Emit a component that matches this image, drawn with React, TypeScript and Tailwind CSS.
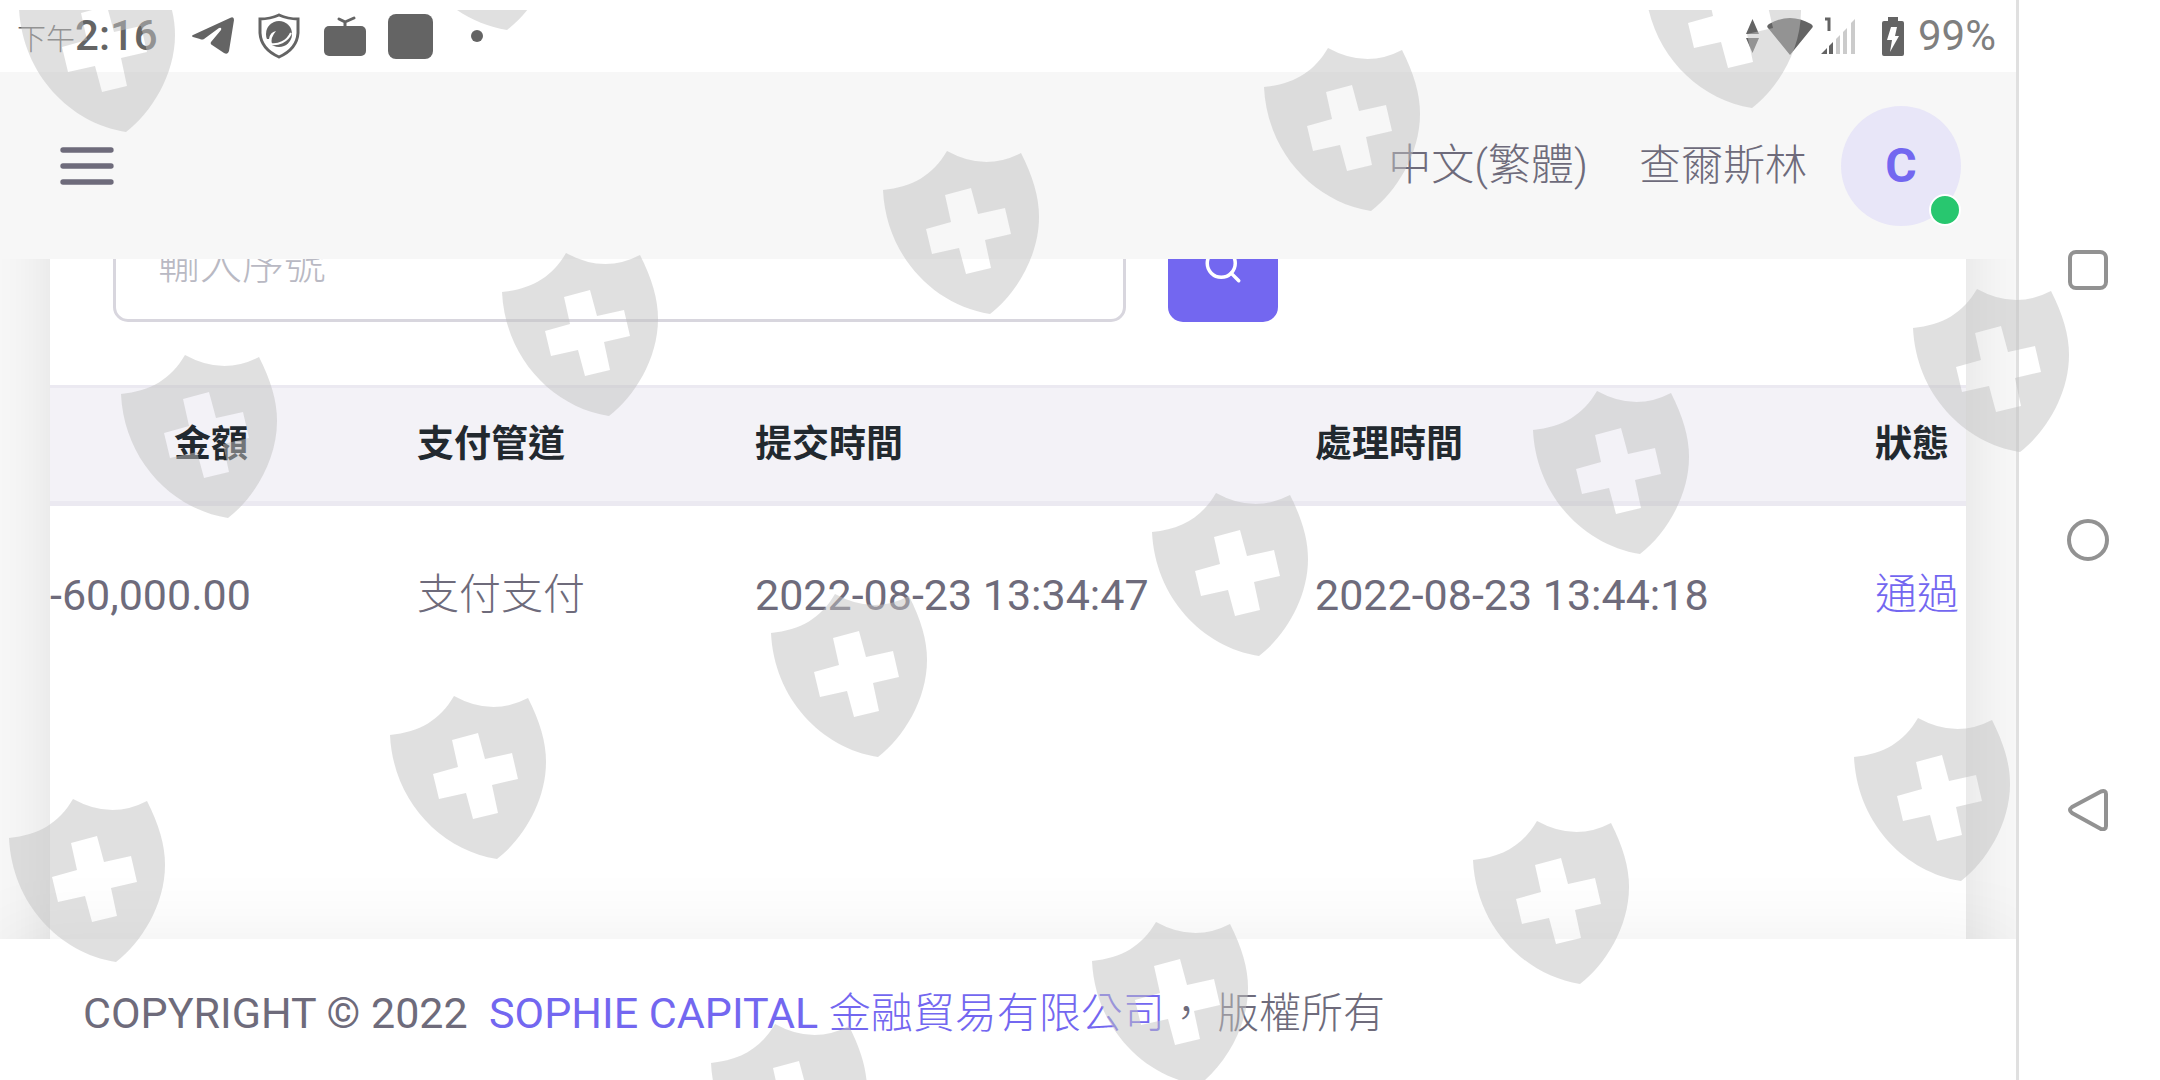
import type { ReactNode } from "react";
import { FiMenu, FiSearch } from "react-icons/fi";

const shields = [
    [19, -32], [400, -134],
    [1645, -56], [1264, 47], [883, 150], [502, 252], [121, 354],
    [1913, 288], [1533, 390], [1152, 492], [771, 593], [390, 695], [9, 798],
    [1854, 717], [1473, 820], [1092, 921], [711, 1023],
];

const columns = [
    { label: "金額", className: "w-[283px] pr-[85px] text-right" },
    { label: "支付管道", className: "w-[338px] pl-[84px] text-left" },
    { label: "提交時間", className: "w-[560px] pl-[84px] text-left" },
    { label: "處理時間", className: "w-[560px] pl-[84px] text-left" },
    { label: "狀態", className: "pl-[84px] text-left" },
];

const records = [
    { amount: "-60,000.00", channel: "支付支付", submitted: "2022-08-23 13:34:47", handled: "2022-08-23 13:44:18", status: "通過" },
];

function Watermark() {
    return (
        <div className="pointer-events-none absolute inset-x-0 top-[10px] bottom-0 z-50 overflow-hidden" aria-hidden="true">
            <svg className="h-full w-full">
                {shields.map(([x, y]) => (
                    <g key={`${x}-${y}`} transform={`translate(${x} ${y - 10})`}>
                        <path
                            fill="#c1c1c1"
                            fillOpacity="0.5"
                            fillRule="evenodd"
                            d="M0 40C30 37 50 25 64 1Q102 22 138 3C150 27 156 47 156 67C156 107 132 145 107 164C50 155 3 105 0 40ZM62 45L68 72L43 79L49 104L76 98L83 124L108 118L102 90L128 84L122 58L95 64L88 38Z"
                        />
                    </g>
                ))}
            </svg>
        </div>
    );
}

function StatusBar() {
    return (
        <div className="flex h-[72px] shrink-0 items-center justify-between bg-white pr-5 pl-[17px] text-[#646464]">
            <div className="flex items-center">
                <div className="mr-[34px] flex items-baseline">
                    <span className="text-[29px] leading-none font-light">下午</span>
                    <span className="text-[42px] leading-none font-medium">2:16</span>
                </div>
                <svg width="42" height="38" viewBox="0 0 42 38" className="mr-6" fill="currentColor">
                    <path d="M1 18L38 1Q42 -1 42 3L37 34Q36 38 32 36L20 28Q18 27 19 25L29 13Q30 10 27 11L12 22Q10 23 8 22L1 20Q-1 19 1 18Z" />
                </svg>
                <svg width="42" height="46" viewBox="0 0 42 46" className="mr-6">
                    <path d="M21 2Q12 6 2 6V20Q3 36 21 44Q39 36 40 20V6Q30 6 21 2Z" fill="none" stroke="currentColor" strokeWidth="3" />
                    <circle cx="21" cy="21" r="13" fill="currentColor" />
                    <path d="M8 26Q10 28 11 32L14 31Q12 25 18 18Q12 19 11 26Z" fill="white" />
                    <path d="M13 31C20 32 29 29 33 20" fill="none" stroke="white" strokeWidth="2" />
                </svg>
                <svg width="42" height="40" viewBox="0 0 42 40" className="mr-[22px]">
                    <path d="M15 3L21 6V12M21 6L30 2" fill="none" stroke="currentColor" strokeWidth="3" strokeLinecap="round" />
                    <rect y="10" width="42" height="30" rx="5" fill="currentColor" />
                </svg>
                <div className="mr-[38px] h-[45px] w-[45px] rounded-lg bg-current" />
                <div className="h-3 w-3 rounded-full bg-current" />
            </div>
            <div className="flex items-center">
                <svg width="13" height="34" viewBox="0 0 13 34" className="mr-2" fill="currentColor">
                    <path d="M6.5 0L13 15H0ZM0 19H13L6.5 34Z" />
                </svg>
                <svg width="46" height="37" viewBox="0 0 46 37" className="mr-2" fill="currentColor">
                    <path d="M2 6Q23 -6 44 6Q47 8 45 10L23 37L1 10Q-1 8 2 6Z" />
                </svg>
                <svg width="35" height="38" viewBox="0 0 35 38" className="mr-[26px]">
                    <path d="M0 37L6 31V37ZM8 29L12 25V37H8Z" fill="currentColor" />
                    <path d="M15 22L19 18V37H15ZM22 15L26 11V37H22ZM30 6L34 2V37H30Z" fill="#cbcbcb" />
                    <path d="M4 2H8V14" fill="none" stroke="currentColor" strokeWidth="3" />
                </svg>
                <svg width="22" height="39" viewBox="0 0 22 39" className="mr-[14px]">
                    <path d="M6 0H16V4H20Q22 4 22 6V37Q22 39 20 39H2Q0 39 0 37V6Q0 4 2 4H6Z" fill="currentColor" />
                    <path d="M9 10H15L13 19H17L8 35L10 23H5Z" fill="white" />
                </svg>
                <span className="text-[42px] leading-none text-[#7f7f7f]">99%</span>
            </div>
        </div>
    );
}

function Navbar() {
    return (
        <header className="relative z-20 flex h-[187px] shrink-0 items-center justify-between bg-[#f7f7f7] pr-[55px] pl-[55px] text-[#6e6b7b]">
            <button type="button" aria-label="menu">
                <FiMenu className="h-16 w-16" />
            </button>
            <div className="flex items-center font-light">
                <button type="button" className="mr-[51px] text-[43px]">中文(繁體)</button>
                <span className="mr-[34px] text-[42px]">查爾斯林</span>
                <div className="relative flex h-[120px] w-[120px] items-center justify-center rounded-full bg-[#e8e6f8] text-[48px] font-bold text-[#7367f0]">
                    C
                    <span className="absolute right-0 bottom-0 h-8 w-8 rounded-full border-2 border-white bg-[#28c76f]" />
                </div>
            </div>
        </header>
    );
}

function SearchForm() {
    return (
        <form className="flex items-stretch gap-[42px] px-[63px] pb-[63px]" onSubmit={(e) => e.preventDefault()}>
            <input
                type="text"
                aria-label="輸入序號"
                placeholder="輸入序號"
                className="h-[115px] min-w-0 basis-[1013px] rounded-[15px] border-3 border-[#d8d6de] bg-white px-[42px] text-[42px] font-light placeholder:text-[#b9b9c3]"
            />
            <button type="submit" aria-label="search" className="flex w-[110px] items-center justify-center rounded-[15px] bg-[#7367f0] text-white">
                <FiSearch className="h-[42px] w-[42px]" />
            </button>
        </form>
    );
}

function RecordTable() {
    return (
        <table className="w-full table-fixed border-collapse whitespace-nowrap">
            <thead>
                <tr className="h-[117px] border-t-3 border-b-5 border-[#ebe9f1] bg-[#f3f2f7] text-[37px] text-[#22292f]">
                    {columns.map((column) => (
                        <th key={column.label} className={column.className}>{column.label}</th>
                    ))}
                </tr>
            </thead>
            <tbody>
                {records.map((record) => (
                    <tr key={record.submitted} className="h-[180px] text-[43px]">
                        <td className="pr-[85px] text-right">{record.amount}</td>
                        <td className="pl-[84px] text-[42px] font-light">{record.channel}</td>
                        <td className="pl-[84px]">{record.submitted}</td>
                        <td className="pl-[84px]">{record.handled}</td>
                        <td className="pl-[84px] text-[42px] font-light text-[#7367f0]">{record.status}</td>
                    </tr>
                ))}
            </tbody>
        </table>
    );
}

function NavKey({ label, children }: { label: string; children: ReactNode }) {
    return (
        <button type="button" aria-label={label}>
            <svg width="42" height="42" viewBox="0 0 42 42" fill="none" stroke="#929292" strokeWidth="4" strokeLinejoin="round">
                {children}
            </svg>
        </button>
    );
}

export default function App() {
    return (
        <div className="relative flex h-screen overflow-hidden bg-white font-[Roboto,'Noto_Sans_CJK_TC',sans-serif]">
            <div className="flex min-w-0 flex-1 flex-col">
                <StatusBar />
                <Navbar />
                <main className="min-h-0 flex-1 overflow-hidden bg-[#f8f8f8] px-[50px] text-[#6e6b7b]">
                    {/* card is scrolled partly under the navbar */}
                    <div className="-mt-[116px] h-[900px] bg-white pt-16 shadow-[0_11px_64px_rgba(0,0,0,0.1)]">
                        <SearchForm />
                        <RecordTable />
                    </div>
                </main>
                <footer className="relative z-10 flex h-[141px] shrink-0 items-center bg-white px-[83px] pt-2 text-[43px] whitespace-pre text-[#6e6b7b] shadow-[0_0_80px_rgba(0,0,0,0.07)]">
                    <span>COPYRIGHT © 2022  </span>
                    <a href="#" className="text-[#7367f0]">SOPHIE CAPITAL <span className="text-[42px] font-light">金融貿易有限公司</span></a>
                    <span className="text-[42px] font-light">， 版權所有</span>
                </footer>
            </div>
            <nav className="z-20 flex w-36 shrink-0 flex-col items-center justify-center gap-[228px] border-l-3 border-[#e0e0e0] bg-white pr-1">
                <NavKey label="recent apps"><rect x="3" y="3" width="36" height="36" rx="6" /></NavKey>
                <NavKey label="home"><circle cx="21" cy="21" r="19" /></NavKey>
                <NavKey label="back"><path d="M34 2.5L5 18Q1 21 5 24L34 40Q39 41 39 37V5Q39 1 34 2.5Z" /></NavKey>
            </nav>
            <Watermark />
        </div>
    );
}
